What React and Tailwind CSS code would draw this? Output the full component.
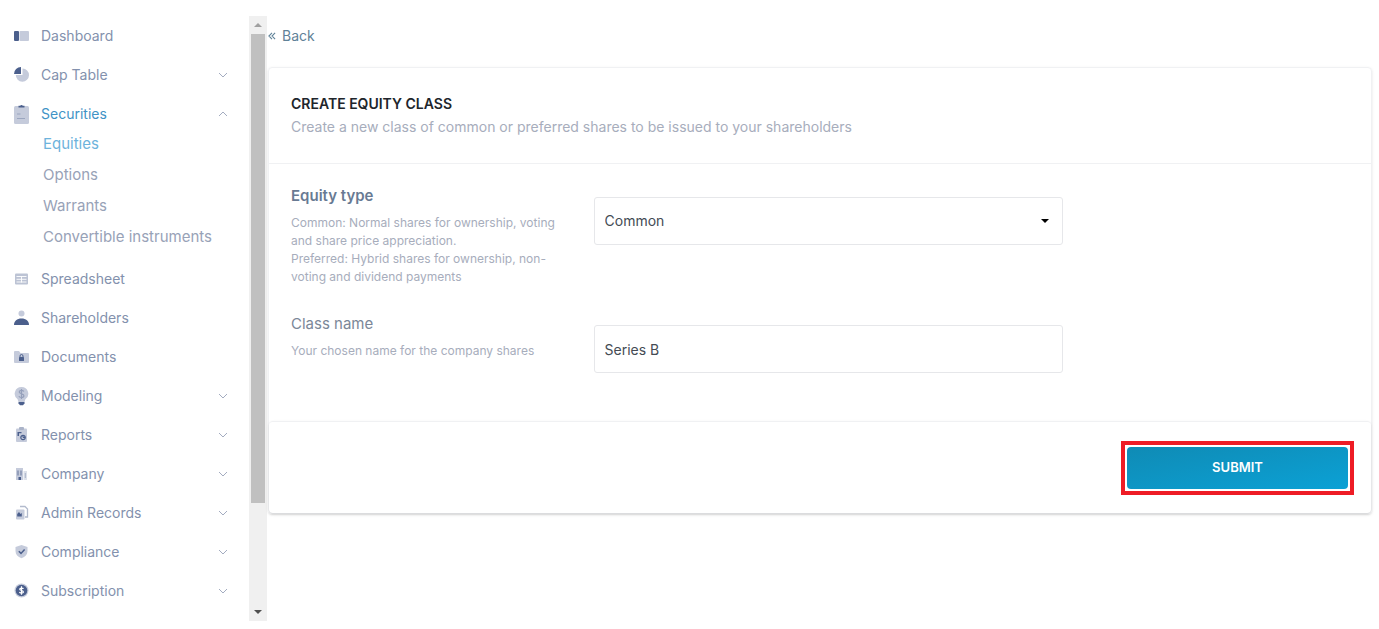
// src/App.jsx
import { useState } from 'react';

const LIGHT = '#c5cbdb';
const DARK = '#4b5f8c';

const icons = {
  dashboard: (
    <>
      <rect x="0" y="3" width="5" height="10" rx="1" fill={DARK} />
      <rect x="5.5" y="3" width="9.5" height="10" rx="1" fill={LIGHT} />
    </>
  ),
  capTable: (
    <>
      <path d="M8.5 1.5v6.5H1.8a6.6 6.6 0 1 0 6.7-6.5z" fill={LIGHT} />
      <path d="M7 0v7H0a7 7 0 0 1 7-7z" fill={DARK} />
    </>
  ),
  spreadsheet: (
    <>
      <rect x="1" y="2.5" width="13" height="11" rx="1" fill="#bcc3d4" />
      <path d="M2.5 5.5h10M2.5 8.3h10M2.5 11h10M7.5 5.5v6" stroke="#fff" strokeWidth="0.9" />
    </>
  ),
  shareholders: (
    <>
      <circle cx="7.5" cy="3.5" r="3" fill={LIGHT} />
      <path d="M0 15c0-4 3-6.5 7.5-6.5S15 11 15 15z" fill={DARK} />
    </>
  ),
  documents: (
    <>
      <path d="M0 3a1 1 0 0 1 1-1h4l1.5 2H14a1 1 0 0 1 1 1v8a1 1 0 0 1-1 1H1a1 1 0 0 1-1-1z" fill={LIGHT} />
      <rect x="5" y="8" width="5" height="4" rx="0.5" fill={DARK} />
      <path d="M6 8V7a1.5 1.5 0 0 1 3 0v1" fill="none" stroke={DARK} />
    </>
  ),
  reports: (
    <>
      <rect x="2" y="1.5" width="11" height="13.5" rx="1" fill={LIGHT} />
      <rect x="5" y="0" width="5" height="3" rx="1" fill="#aab3c8" />
      <path d="M3.5 5h4v1.3H5V9H3.5z" fill={DARK} />
      <circle cx="9" cy="10.5" r="2.2" fill="none" stroke={DARK} strokeWidth="1.2" />
      <path d="M9 8.3v2.2h2.2" fill="none" stroke={DARK} />
    </>
  ),
  company: (
    <>
      <rect x="2" y="2" width="7" height="12" fill={LIGHT} />
      <path d="M9.5 5H13v9H9.5z" fill="#dde1ea" />
      <path d="M4 4.5v5M7 4.5v5" stroke="#7483a5" strokeWidth="1.2" />
      <rect x="4.5" y="11" width="2.5" height="3" fill={DARK} />
      <path d="M11.3 7v5" stroke="#aab3c8" />
    </>
  ),
  admin: (
    <>
      <path d="M6 1.5h5l2.5 2.5v8H11" fill="none" stroke="#b3bbcd" strokeWidth="1.3" />
      <rect x="2" y="4.5" width="8.5" height="10" rx="1" fill={LIGHT} />
      <path d="M3.2 11.5V9l1.8-2 1.5 2 1.3-1v3.5z" fill={DARK} />
    </>
  ),
  compliance: (
    <>
      <path d="M7.5 1 13.5 3v4c0 3.5-2.3 5.8-6 7.2C3.8 12.8 1.5 10.5 1.5 7V3z" fill={LIGHT} />
      <path d="m4.8 7.2 2.2 2.2 3.6-4" fill="none" stroke={DARK} strokeWidth="1.5" />
    </>
  ),
  subscription: (
    <>
      <circle cx="7.5" cy="7.5" r="7" fill={LIGHT} />
      <circle cx="7.5" cy="7.5" r="5.8" fill={DARK} />
      <path d="M9.5 5.8C9.2 4.9 5.7 4.6 5.7 6.2S9.4 7.2 9.4 8.9 5.8 10.3 5.4 9M7.5 3.3v8.4" fill="none" stroke="#fff" strokeWidth="1.2" />
    </>
  ),
};

// these two are taller than the rest
const tallIcons = {
  securities: (
    <>
      <rect x="0" y="2" width="15" height="18" rx="1.5" fill={LIGHT} />
      <path d="M4.5 3.500V1.800h1.700a1.400 1.400 0 0 1 2.600 0h1.700v1.700z" fill={DARK} />
      <path d="M3 10h3.500M3 14.500h8" stroke="#9ba6bf" strokeWidth="1.2" />
    </>
  ),
  modeling: (
    <>
      <path d="M7.5 1a6.7 6.7 0 0 0-3.9 12.2l.9 2.8h6l.9-2.8A6.700 6.700 0 0 0 7.500 1z" fill={LIGHT} />
      <path d="M9.8 5.500C9.200 3.800 5.200 3.900 5.200 6s4.700 1.400 4.700 3.700-4.400 2.300-5 .4M7.500 3v10" fill="none" stroke="#95a0bb" strokeWidth="1.2" />
      <path d="M4.500 16h6v1.500l-1.500 1.700H6l-1.500-1.700z" fill={DARK} />
    </>
  ),
};

const menu = [
  { icon: 'dashboard', label: 'Dashboard' },
  { icon: 'capTable', label: 'Cap Table', expandable: true },
  {
    icon: 'securities',
    label: 'Securities',
    expandable: true,
    children: ['Equities', 'Options', 'Warrants', 'Convertible instruments'],
  },
  { icon: 'spreadsheet', label: 'Spreadsheet' },
  { icon: 'shareholders', label: 'Shareholders' },
  { icon: 'documents', label: 'Documents' },
  { icon: 'modeling', label: 'Modeling', expandable: true },
  { icon: 'reports', label: 'Reports', expandable: true },
  { icon: 'company', label: 'Company', expandable: true },
  { icon: 'admin', label: 'Admin Records', expandable: true },
  { icon: 'compliance', label: 'Compliance', expandable: true },
  { icon: 'subscription', label: 'Subscription', expandable: true },
];

const NavIcon = ({ name }) =>
  tallIcons[name] ? (
    <svg viewBox="0 0 15 20" className="h-5 w-[15px] shrink-0" aria-hidden="true">{tallIcons[name]}</svg>
  ) : (
    <svg viewBox="0 0 15 15" className="size-[15px] shrink-0" aria-hidden="true">{icons[name]}</svg>
  );

const Chevron = ({ up }) => (
  <svg viewBox="0 0 8 8" className="ml-auto size-2" fill="none" stroke="#a3acc0" aria-hidden="true">
    <path d={up ? 'M0 6l4-4 4 4' : 'M0 2l4 4 4-4'} />
  </svg>
);

const NavItem = ({ item }) => {
  const rowClass = 'flex h-[39px] w-full items-center gap-3 pl-3.5 pr-[22px] text-sm';
  const color = item.children ? 'text-[#3f93c6]' : 'text-[#8391ad]';

  return (
    <li>
      {item.expandable ? (
        <button type="button" aria-expanded={!!item.children} className={`${rowClass} ${color}`}>
          <NavIcon name={item.icon} />
          {item.label}
          <Chevron up={!!item.children} />
        </button>
      ) : (
        <a href="#" className={`${rowClass} ${color}`}>
          <NavIcon name={item.icon} />
          {item.label}
        </a>
      )}
      {item.children && (
        <ul className="-mt-1 pb-1.5 pl-[43px]">
          {item.children.map((child) => (
            <li key={child}>
              <a
                href="#"
                className={`flex h-[31px] items-center text-[15px] ${child === 'Equities' ? 'text-[#6db3dc]' : 'text-[#98a2b7]'}`}
              >
                {child}
              </a>
            </li>
          ))}
        </ul>
      )}
    </li>
  );
};

const ScrollBar = () => (
  <div className="flex w-[18px] shrink-0 flex-col bg-[#f0f0f0]" aria-hidden="true">
    <div className="flex h-[18px] items-center justify-center">
      <svg viewBox="0 0 8 4" className="h-1 w-2"><path d="M0 4l4-4 4 4z" fill="#a0a0a0" /></svg>
    </div>
    <div className="mx-auto w-3.5 flex-33 bg-[#c0c0c0]" />
    <div className="flex-7" />
    <div className="flex h-[18px] items-center justify-center">
      <svg viewBox="0 0 8 4" className="h-1 w-2"><path d="M0 0l4 4 4-4z" fill="#505050" /></svg>
    </div>
  </div>
);

const rowGrid = 'grid grid-cols-[302fr_469fr_285fr]';
const fieldClass =
  'h-12 w-full rounded-[3px] border border-[#e6e7ea] bg-white px-2.5 text-sm text-[#444b54] outline-none focus:border-[#3f93c6]';

const App = () => {
  const [formData, setFormData] = useState({ type: 'Common', name: 'Series B' });

  const handleChange = (e) => {
    const { name, value } = e.target;
    setFormData(prev => ({ ...prev, [name]: value }));
  };

  return (
    <div className="flex min-h-screen bg-white pt-4 pb-2 font-['Inter',sans-serif]">
      <nav className="w-[249px] shrink-0">
        <ul>
          {menu.map((item) => (
            <NavItem key={item.label} item={item} />
          ))}
        </ul>
      </nav>
      <ScrollBar />

      <main className="min-w-0 flex-1 pr-[7px] pl-px">
        <a href="#" className="flex h-10 w-fit items-center gap-1.5 text-sm text-[#5f8298]">
          <svg viewBox="0 0 9 9" className="size-2" fill="none" stroke="currentColor" strokeWidth="1.2" aria-hidden="true">
            <path d="M4.5 1 1 4.5 4.5 8M8 1 4.5 4.5 8 8" />
          </svg>
          Back
        </a>

        <form className="mt-[11px] rounded border border-[#f0f1f3] shadow-sm" onSubmit={(e) => e.preventDefault()}>
          <header className="border-b border-[#f0f1f3] px-[22px] pt-6 pb-[25px]">
            <h1 className="text-sm leading-[23px] font-semibold text-[#20252b]">CREATE EQUITY CLASS</h1>
            <p className="text-sm leading-[23px] text-[#a7adbc]">
              Create a new class of common or preferred shares to be issued to your shareholders
            </p>
          </header>

          <div className="flex flex-col gap-[26px] px-[22px] pt-5 pb-12">
            <div className={rowGrid}>
              <div>
                <label htmlFor="type" className="block text-[15px] leading-6 font-semibold text-[#687a93]">
                  Equity type
                </label>
                <p className="mt-1.5 pr-6 text-xs leading-[18px] text-[#a7adbc]">
                  Common: Normal shares for ownership, voting and share price appreciation.
                  <br />
                  Preferred: Hybrid shares for ownership, non-voting and dividend payments
                </p>
              </div>
              <div className="relative mt-[13px] h-12">
                <select id="type" name="type" value={formData.type} onChange={handleChange} className={`${fieldClass} appearance-none`}>
                  <option>Common</option>
                  <option>Preferred</option>
                </select>
                <svg viewBox="0 0 8 4" className="pointer-events-none absolute top-[22px] right-3.5 h-1 w-2" aria-hidden="true">
                  <path d="M0 0l4 4 4-4z" fill="#000" />
                </svg>
              </div>
            </div>

            <div className={rowGrid}>
              <div>
                <label htmlFor="name" className="block text-[15px] leading-6 text-[#7b8798]">
                  Class name
                </label>
                <p className="mt-1.5 pr-6 text-xs leading-[18px] text-[#a7adbc]">
                  Your chosen name for the company shares
                </p>
              </div>
              <input id="name" type="text" name="name" value={formData.name} onChange={handleChange} className={`${fieldClass} mt-[13px]`} />
            </div>
          </div>

          <footer className="flex justify-end rounded border-t border-[#f0f1f3] pt-[19px] pr-[17px] pb-[18px] shadow-sm">
            <div className="border-4 border-[#ee1c25] p-0.5">
              <button
                type="submit"
                className="block h-[42px] w-[221px] rounded bg-linear-to-br from-[#0f8bb5] to-[#0ba1d5] text-[13px] font-semibold text-white"
              >
                SUBMIT
              </button>
            </div>
          </footer>
        </form>
      </main>
    </div>
  );
};

export default App;
